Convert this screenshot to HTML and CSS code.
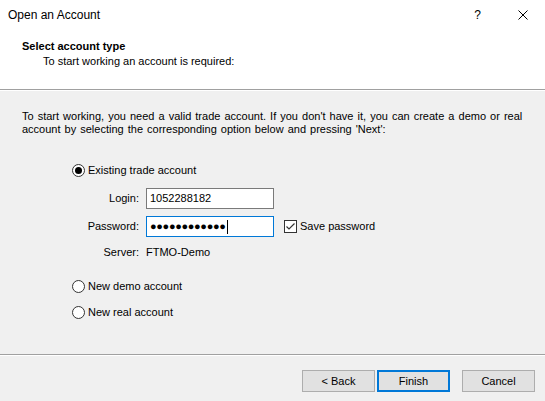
FILE: index.html
```html
<!DOCTYPE html>
<html>
<head>
<meta charset="utf-8">
<link rel="stylesheet" href="styles.css">
</head>
<body>
<div class="window">
  <div class="titlebar">
    <span class="title">Open an Account</span>
    <span class="help">?</span>
    <svg class="close" width="10" height="10" viewBox="0 0 10 10"><path d="M0.5 0.5L9.5 9.5M9.5 0.5L0.5 9.5" stroke="#000" stroke-width="1" fill="none"/></svg>
  </div>
  <div class="header">
    <div class="h-title">Select account type</div>
    <div class="h-sub">To start working an account is required:</div>
  </div>
  <div class="main">
    <p class="intro">To start working, you need a valid trade account. If you don't have it, you can create a demo or real account by selecting the corresponding option below and pressing 'Next':</p>
    <div class="radio-row first">
      <svg class="radio" width="13" height="13" viewBox="0 0 13 13"><circle cx="6.5" cy="6.5" r="6" fill="#fff" stroke="#333"/><circle cx="6.5" cy="6.5" r="3.5" fill="#000"/></svg>
      <span>Existing trade account</span>
    </div>
    <div class="form-row login">
      <label class="lbl">Login:</label>
      <div class="input">1052288182</div>
    </div>
    <div class="form-row pwd">
      <label class="lbl">Password:</label>
      <div class="input focus"><span class="dots">●●●●●●●●●●●●</span><span class="caret"></span></div>
      <div class="check">
        <svg width="13" height="13" viewBox="0 0 13 13"><rect x="0.5" y="0.5" width="12" height="12" fill="#fff" stroke="#333"/><path d="M2.5 6.5L5 9L10.5 3.5" stroke="#333" stroke-width="1.2" fill="none"/></svg>
        <span>Save password</span>
      </div>
    </div>
    <div class="form-row server">
      <label class="lbl">Server:</label>
      <span class="val">FTMO-Demo</span>
    </div>
    <div class="radio-row demo">
      <svg class="radio" width="13" height="13" viewBox="0 0 13 13"><circle cx="6.5" cy="6.5" r="6" fill="#fff" stroke="#333"/></svg>
      <span>New demo account</span>
    </div>
    <div class="radio-row real">
      <svg class="radio" width="13" height="13" viewBox="0 0 13 13"><circle cx="6.5" cy="6.5" r="6" fill="#fff" stroke="#333"/></svg>
      <span>New real account</span>
    </div>
  </div>
  <div class="footer">
    <button class="btn back">&lt; Back</button>
    <button class="btn finish">Finish</button>
    <button class="btn cancel">Cancel</button>
  </div>
</div>
</body>
</html>
```
FILE: styles.css
```css
* { box-sizing: border-box; }
html, body { margin: 0; padding: 0; }
body {
  font-family: "Liberation Sans", Arial, sans-serif;
  font-size: 11px;
  color: #000;
  background: #f0f0f0;
}
.window {
  width: 545px;
  height: 401px;
  display: flex;
  flex-direction: column;
  background: #f0f0f0;
  overflow: hidden;
}
.titlebar {
  height: 30px;
  background: #fff;
  display: flex;
  align-items: center;
  padding-left: 8px;
  font-size: 12px;
}
.title { flex: 1; }
.help { margin-right: 37px; font-size: 12px; }
.close { margin-right: 17px; }
.header {
  height: 60px;
  background: #fff;
  padding: 10px 0 0 22px;
  border-bottom: 1px solid #a0a0a0;
  box-shadow: 0 1px 0 #fff;
  line-height: 13px;
}
.h-title { font-weight: bold; }
.h-sub { margin-top: 2px; padding-left: 21px; }
.main {
  flex: 1;
  padding: 20px 0 0 22px;
  line-height: 13px;
  border-bottom: 1px solid #a0a0a0;
  box-shadow: 0 1px 0 #fff;
}
.intro { margin: 0; width: 515px; word-spacing: 1px; }
.radio-row {
  display: flex;
  align-items: center;
  height: 16px;
  margin-left: 50px;
  gap: 3px;
}
.radio-row.first { margin-top: 26px; }
.radio-row.demo { margin-top: 18px; }
.radio-row.real { margin-top: 10px; }
.form-row {
  display: flex;
  align-items: center;
  height: 21px;
}
.form-row.login { margin-top: 10px; }
.form-row.pwd { margin-top: 7px; }
.form-row.server { margin-top: 7px; height: 16px; }
.lbl { width: 117px; text-align: right; margin-right: 7px; }
.input {
  width: 128px;
  height: 21px;
  background: #fff;
  border: 1px solid #7a7a7a;
  padding: 0 3px;
  display: flex;
  align-items: center;
}
.input.focus { border-color: #0078d7; }
.dots { letter-spacing: -0.35px; font-size: 11px; }
.caret { width: 1px; height: 14px; background: #000; margin-left: 1px; }
.check {
  display: flex;
  align-items: center;
  gap: 3px;
  margin-left: 10px;
}
.footer {
  height: 46px;
  display: flex;
  justify-content: flex-end;
  align-items: flex-start;
  padding: 15px 10px 0 0;
}
.btn {
  font-family: "Liberation Sans", Arial, sans-serif;
  font-size: 11px;
  width: 73px;
  height: 22px;
  background: #e1e1e1;
  border: 1px solid #adadad;
  padding: 0;
  color: #000;
}
.btn.finish { border: 2px solid #0078d7; margin-left: 2px; }
.btn.cancel { margin-left: 12px; }
```
